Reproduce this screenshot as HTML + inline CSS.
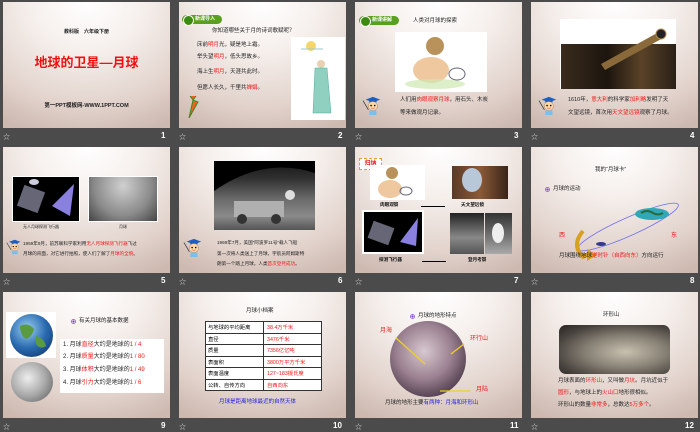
<!DOCTYPE html>
<html><head><meta charset="utf-8">
<style>
*{margin:0;padding:0;box-sizing:border-box}
body{width:700px;height:430px;background:#4b4b4b;position:relative;overflow:hidden;font-family:"Liberation Sans","Noto Sans CJK SC",sans-serif}
.s{position:absolute;width:167px;height:126px;overflow:hidden;background:radial-gradient(ellipse 95% 110% at 50% 0%,#ffffff 0%,#f6f0ed 35%,#e2d3cc 75%,#cdb9b0 100%)}
.a{position:absolute;white-space:nowrap;line-height:1}
.r{color:#f01818}
.b{color:#2020e0}
.n{position:absolute;color:#fff;font-size:8px;font-weight:bold}
.ic{position:absolute;color:#ddd;font-size:7px}
.badge{position:absolute;height:9px;width:40px;background:#5aa020;border-radius:5px;color:#fff;font-size:5px;font-weight:bold;padding-left:13px;line-height:9px}
.badge:before{content:"";position:absolute;left:1px;top:0;width:9px;height:9px;border-radius:50%;background:#3d8a10;border:1px solid #fff}
.t{font-size:5.5px;color:#222}
.teach{position:absolute;width:20px;height:22px}
</style></head><body>

<svg width="0" height="0" style="position:absolute">
<defs>
<g id="tc">
<line x1="1" y1="6" x2="7" y2="16" stroke="#333" stroke-width="0.8"/>
<polygon points="4,5 12,2 20,5 12,8" fill="#1e5fc0"/>
<rect x="8" y="5" width="8" height="3" fill="#1e5fc0"/>
<circle cx="12" cy="12" r="5" fill="#fbd7a8" stroke="#a0663a" stroke-width="0.4"/>
<circle cx="10" cy="11.5" r="0.9" fill="#000"/><circle cx="14" cy="11.5" r="0.9" fill="#000"/>
<path d="M10 14 Q12 15.5 14 14" stroke="#c33" stroke-width="0.6" fill="none"/>
<rect x="8" y="17" width="8" height="5" fill="#7ac0e8"/>
</g>
</defs>
</svg>

<!-- Slide 1 -->
<div class="s" style="left:3px;top:2px">
<div class="a" style="left:0;width:167px;text-align:center;top:28px;font-size:5px;font-weight:bold;color:#222">教科版　六年级下册</div>
<div class="a" style="left:0;width:167px;text-align:center;top:54px;font-size:13px;font-weight:bold;color:#f01010">地球的卫星—月球</div>
<div class="a" style="left:0;width:167px;text-align:center;top:102px;font-size:5.5px;font-weight:bold;color:#222">第一PPT模板网-WWW.1PPT.COM</div>
</div>

<!-- Slide 2 -->
<div class="s" style="left:179px;top:2px">
<div class="badge" style="left:3px;top:13px">新课导入</div>
<div class="a t" style="left:33px;top:27px">你知道哪些关于月的诗词歌赋呢？</div>
<div class="a t" style="left:18px;top:41px">床前<span class="r">明月</span>光，疑是地上霜。</div>
<div class="a t" style="left:18px;top:53px">举头望<span class="r">明月</span>，低头思故乡。</div>
<div class="a t" style="left:18px;top:68px">海上生<span class="r">明月</span>，天涯共此时。</div>
<div class="a t" style="left:18px;top:84px">但愿人长久，千里共<span class="r">婵娟</span>。</div>
<div style="position:absolute;left:112px;top:35px;width:54px;height:83px;background:#fff"></div>
<svg style="position:absolute;left:112px;top:35px" width="54" height="83">
<circle cx="20" cy="9" r="5" fill="#f6d66a"/><path d="M10 12 h22" stroke="#9cc" stroke-width="1"/>
<circle cx="30" cy="27" r="4" fill="#e8d0b0"/>
<path d="M24 31 L36 31 L40 76 L22 76 Z" fill="#8fd0c0" stroke="#5a9" stroke-width="0.5"/>
</svg>
<svg style="position:absolute;left:4px;top:92px" width="22" height="26"><path d="M7 2 l3 4 3-4 M10 6 L6 24 L15 8 Z" fill="#f06020" stroke="#3a8a20" stroke-width="1"/></svg>
</div>

<!-- Slide 3 -->
<div class="s" style="left:355px;top:2px">
<div class="badge" style="left:4px;top:14px">新课讲解</div>
<div class="a t" style="left:58px;top:17px">人类对月球的探索</div>
<div style="position:absolute;left:40px;top:30px;width:92px;height:60px;background:#fff"></div>
<svg style="position:absolute;left:40px;top:30px" width="92" height="60"><circle cx="40" cy="14" r="9" fill="#b8925a"/><ellipse cx="36" cy="38" rx="18" ry="13" fill="#f0c8a0"/><ellipse cx="62" cy="42" rx="8" ry="6" fill="none" stroke="#667" stroke-width="1"/><ellipse cx="40" cy="52" rx="30" ry="5" fill="#cde8b0" opacity=".7"/></svg>
<svg class="teach" style="left:7px;top:93px" viewBox="0 0 22 24"><use href="#tc"/></svg>
<div class="a t" style="left:45px;top:96px">人们用<span class="r">肉眼观察月球</span>，用石头、木炭</div>
<div class="a t" style="left:45px;top:109px">等来做观月记录。</div>
</div>

<!-- Slide 4 -->
<div class="s" style="left:531px;top:2px">
<div style="position:absolute;left:29px;top:17px;width:116px;height:70px;background:#fff"></div>
<div style="position:absolute;left:30px;top:42px;width:115px;height:45px;background:linear-gradient(90deg,#3a2c1e,#1c150e 40%,#5a4228 70%,#2a2016)"></div>
<svg style="position:absolute;left:60px;top:22px" width="80" height="50"><path d="M10 40 L68 8 L72 14 L14 46 Z" fill="#8a6a3a"/><circle cx="70" cy="10" r="5" fill="#222" stroke="#b08a50"/></svg>
<svg class="teach" style="left:7px;top:93px" viewBox="0 0 22 24"><use href="#tc"/></svg>
<div class="a t" style="left:37px;top:96px">1610年，<span class="r">意大利</span>的科学家<span class="r">加利略</span>发明了天</div>
<div class="a t" style="left:37px;top:109px">文望远镜，首次用<span class="r">天文望远镜</span>观察了月球。</div>
</div>

<!-- Slide 5 -->
<div class="s" style="left:3px;top:147px">
<div style="position:absolute;left:9px;top:29px;width:68px;height:46px;background:#000;border:1px solid #fff"></div>
<svg style="position:absolute;left:9px;top:29px" width="68" height="46"><rect x="8" y="12" width="22" height="22" fill="#667" transform="rotate(20 19 23)"/><polygon points="40,30 62,8 58,40" fill="#8a80e0"/><ellipse cx="22" cy="6" rx="5" ry="3" fill="#ccd"/></svg>
<div style="position:absolute;left:85px;top:29px;width:70px;height:46px;background:radial-gradient(ellipse at 50% 20%,#d0d0d0,#8a8a8a 60%,#444);border:1px solid #fff"></div>
<div class="a" style="left:20px;top:78px;font-size:4px;color:#222">无人月球探测飞行器</div>
<div class="a" style="left:116px;top:78px;font-size:4px;color:#222">月球</div>
<svg class="teach" style="left:3px;top:91px;width:16px;height:18px" viewBox="0 0 22 24"><use href="#tc"/></svg>
<div class="a" style="left:20px;top:95px;font-size:4.6px;color:#222">1959年9月，前苏联科学家利用<span class="r">无人月球探测飞行器</span>飞过</div>
<div class="a" style="left:20px;top:105px;font-size:4.6px;color:#222">月球的背面，对它进行拍照，使人们了解了<span class="r">月球的全貌</span>。</div>
</div>

<!-- Slide 6 -->
<div class="s" style="left:179px;top:147px">
<div style="position:absolute;left:35px;top:14px;width:101px;height:69px;background:linear-gradient(180deg,#151515 0%,#303030 25%,#6a6a6a 55%,#8a8a8a 80%,#555 100%)"></div>
<svg style="position:absolute;left:35px;top:14px" width="101" height="69"><path d="M0 30 Q50 -5 101 12 L101 0 L0 0Z" fill="#000"/><rect x="20" y="40" width="50" height="16" fill="#b0b0b0"/><circle cx="28" cy="58" r="5" fill="#333"/><circle cx="62" cy="58" r="5" fill="#333"/><circle cx="76" cy="34" r="5" fill="#ddd"/></svg>
<svg class="teach" style="left:4px;top:90px" viewBox="0 0 22 24"><use href="#tc"/></svg>
<div class="a" style="left:38px;top:94px;font-size:4.6px;color:#222">1969年7月，美国“阿波罗11号”载人飞船</div>
<div class="a" style="left:38px;top:105px;font-size:4.6px;color:#222">第一次将人类送上了月球，宇航员阿姆斯特</div>
<div class="a" style="left:38px;top:115px;font-size:4.6px;color:#222">朗第一个踏上月球，人类<span class="r">首次登月成功</span>。</div>
</div>

<!-- Slide 7 -->
<div class="s" style="left:355px;top:147px">
<div style="position:absolute;left:4px;top:11px;width:23px;height:12px;border:1px dashed #e9a020;background:#fff;color:#f02020;font-size:6px;font-weight:bold;text-align:center;line-height:10px">归纳</div>
<div style="position:absolute;left:15px;top:18px;width:55px;height:35px;background:#fff"></div>
<svg style="position:absolute;left:15px;top:18px" width="55" height="35"><circle cx="22" cy="8" r="6" fill="#b8925a"/><ellipse cx="20" cy="24" rx="12" ry="9" fill="#f0c8a0"/><ellipse cx="36" cy="26" rx="6" ry="4" fill="none" stroke="#667"/></svg>
<div style="position:absolute;left:97px;top:19px;width:56px;height:33px;background:linear-gradient(90deg,#5a3a28,#8a5a38,#3a2418)"></div>
<svg style="position:absolute;left:97px;top:19px" width="56" height="33"><ellipse cx="20" cy="14" rx="10" ry="12" fill="#b8c8d8"/></svg>
<div class="a" style="left:25px;top:56px;font-size:4.6px;font-weight:bold;color:#111">肉眼观察</div>
<div class="a" style="left:106px;top:56px;font-size:4.6px;font-weight:bold;color:#111">天文望远镜</div>
<div style="position:absolute;left:66px;top:59px;width:24px;height:1px;background:#000"></div>
<div style="position:absolute;left:7px;top:63px;width:62px;height:44px;background:#000;border:2px solid #fff"></div>
<svg style="position:absolute;left:9px;top:65px" width="58" height="40"><rect x="6" y="12" width="22" height="18" fill="#667" transform="rotate(20 17 21)"/><polygon points="36,30 54,6 52,34" fill="#8a80e0"/></svg>
<div style="position:absolute;left:95px;top:66px;width:34px;height:41px;background:linear-gradient(180deg,#222,#888 60%,#555)"></div>
<div style="position:absolute;left:130px;top:66px;width:27px;height:41px;background:linear-gradient(180deg,#333,#777 60%,#aaa)"></div>
<svg style="position:absolute;left:130px;top:66px" width="27" height="41"><ellipse cx="13" cy="20" rx="6" ry="10" fill="#eee"/></svg>
<div class="a" style="left:24px;top:111px;font-size:4.6px;font-weight:bold;color:#111">探测飞行器</div>
<div class="a" style="left:113px;top:111px;font-size:4.6px;font-weight:bold;color:#111">登月考察</div>
<div style="position:absolute;left:67px;top:114px;width:24px;height:1px;background:#000"></div>
</div>

<!-- Slide 8 -->
<div class="s" style="left:531px;top:147px">
<div class="a t" style="left:64px;top:21px">我的“月球卡”</div>
<div style="position:absolute;left:14px;top:40px;width:5px;height:5px;border:1px solid #9b6be0;border-radius:50%;background:radial-gradient(#7040c0 40%,transparent 45%)"></div>
<div class="a t" style="left:22px;top:40px">月球的运动</div>
<svg style="position:absolute;left:0;top:0" width="167" height="126">
<ellipse cx="97" cy="80" rx="55" ry="9" transform="rotate(-24 97 80)" fill="none" stroke="#7070f0" stroke-width="0.8"/>
<ellipse cx="121" cy="67" rx="17" ry="6" fill="#30a8b8"/><path d="M110 66 q6-4 12 0 q5 3 10 0" stroke="#2a6a3a" stroke-width="2" fill="none"/>
<ellipse cx="70" cy="97" rx="5" ry="2" fill="#333a88"/>
<path d="M52 84 Q40 98 52 110 L60 106" stroke="#d8a020" stroke-width="4" fill="none"/>
<polygon points="56,102 66,108 56,114" fill="#d8a020"/>
</svg>
<div class="a r" style="left:28px;top:86px;font-size:6px">西</div>
<div class="a r" style="left:140px;top:86px;font-size:6px">东</div>
<div class="a t" style="left:28px;top:107px">月球围绕地球<span class="r">逆时针（自西向东）</span>方向运行</div>
</div>

<!-- Slide 9 -->
<div class="s" style="left:3px;top:292px">
<div style="position:absolute;left:3px;top:20px;width:50px;height:46px;background:#fff"></div>
<div style="position:absolute;left:7px;top:22px;width:43px;height:43px;border-radius:50%;background:radial-gradient(circle at 40% 35%,#9ad0f0,#2a6ab0 50%,#0a2a5a)"></div>
<svg style="position:absolute;left:7px;top:22px" width="43" height="43"><path d="M10 12 q8-4 14 3 q-2 8-8 10 q-6-4-6-13z M26 22 q8 2 10 10 q-6 4-10-2z" fill="#5a9a40"/></svg>
<div style="position:absolute;left:8px;top:70px;width:42px;height:40px;border-radius:50%;background:radial-gradient(circle at 40% 40%,#eee,#aaa 50%,#555)"></div>
<div style="position:absolute;left:68px;top:27px;width:5px;height:5px;border:1px solid #9b6be0;border-radius:50%;background:radial-gradient(#7040c0 40%,transparent 45%)"></div>
<div class="a t" style="left:76px;top:27px">有关月球的基本数据</div>
<div style="position:absolute;left:57px;top:47px;width:104px;height:54px;background:#fff"></div>
<div class="a" style="left:60px;top:50px;font-size:6px;color:#222">1. 月球<span class="r">直径</span>大约是地球的<span class="r">1 / 4</span></div>
<div class="a" style="left:60px;top:62px;font-size:6px;color:#222">2. 月球<span class="r">质量</span>大约是地球的<span class="r">1 / 80</span></div>
<div class="a" style="left:60px;top:75px;font-size:6px;color:#222">3. 月球<span class="r">体积</span>大约是地球的<span class="r">1 / 49</span></div>
<div class="a" style="left:60px;top:88px;font-size:6px;color:#222">4. 月球<span class="r">引力</span>大约是地球的<span class="r">1 / 6</span></div>
</div>

<!-- Slide 10 -->
<div class="s" style="left:179px;top:292px">
<div class="a t" style="left:67px;top:17px">月球小档案</div>
<table style="position:absolute;left:26px;top:29px;border-collapse:collapse;font-size:5.3px;background:#fff;font-family:inherit">
<tr><td style="border:0.8px solid #333;width:58px;height:11.5px;padding-left:2px">与地球的平均距离</td><td class="r" style="border:0.8px solid #333;width:58px;padding-left:3px">38.4万千米</td></tr>
<tr><td style="border:0.8px solid #333;height:11.5px;padding-left:2px">直径</td><td class="r" style="border:0.8px solid #333;padding-left:3px">3476千米</td></tr>
<tr><td style="border:0.8px solid #333;height:11.5px;padding-left:2px">质量</td><td class="r" style="border:0.8px solid #333;padding-left:3px">7356亿亿吨</td></tr>
<tr><td style="border:0.8px solid #333;height:11.5px;padding-left:2px">表面积</td><td class="r" style="border:0.8px solid #333;padding-left:3px">3800万平方千米</td></tr>
<tr><td style="border:0.8px solid #333;height:11.5px;padding-left:2px">表面温度</td><td class="r" style="border:0.8px solid #333;padding-left:3px">127~183摄氏度</td></tr>
<tr><td style="border:0.8px solid #333;height:11.5px;padding-left:2px">公转、自传方向</td><td class="r" style="border:0.8px solid #333;padding-left:3px">自西向东</td></tr>
</table>
<div class="a b" style="left:40px;top:108px;font-size:5.5px">月球是距离地球最近的自然天体</div>
</div>

<!-- Slide 11 -->
<div class="s" style="left:355px;top:292px">
<div style="position:absolute;left:55px;top:22px;width:5px;height:5px;border:1px solid #9b6be0;border-radius:50%;background:radial-gradient(#7040c0 40%,transparent 45%)"></div>
<div class="a t" style="left:63px;top:22px">月球的地形特点</div>
<div style="position:absolute;left:35px;top:29px;width:76px;height:76px;border-radius:50%;background:radial-gradient(circle at 45% 40%,#d8c8d0,#9a8090 45%,#4a3848 80%,#1a1018)"></div>
<svg style="position:absolute;left:0;top:0" width="167" height="126"><line x1="41" y1="46" x2="70" y2="72" stroke="#f0d020" stroke-width="1.3"/><line x1="109" y1="52" x2="96" y2="62" stroke="#f0d020" stroke-width="1.3"/><line x1="85" y1="99" x2="115" y2="99" stroke="#f0d020" stroke-width="1.3"/></svg>
<div class="a r" style="left:25px;top:36px;font-size:6px">月海</div>
<div class="a r" style="left:115px;top:44px;font-size:6px">环行山</div>
<div class="a r" style="left:121px;top:95px;font-size:6px">月陆</div>
<div class="a t" style="left:30px;top:109px">月球的地形主要<span class="b">有两种：月海和环形山</span></div>
</div>

<!-- Slide 12 -->
<div class="s" style="left:531px;top:292px">
<div class="a t" style="left:72px;top:21px">环形山</div>
<div style="position:absolute;left:28px;top:33px;width:111px;height:49px;border-radius:7px;background:radial-gradient(ellipse at 60% 55%,#c8c0b0,#8a8478 40%,#4a4440 75%,#2a2420)"></div>
<div class="a t" style="left:27px;top:87px">月球表面的<span class="r">环形山</span>，又叫做<span class="r">月坑</span>。月坑近似于</div>
<div class="a t" style="left:27px;top:99px"><span class="r">圆形</span>，与地球上的<span class="r">火山口</span>地形很相似。</div>
<div class="a t" style="left:27px;top:111px">环形山的数量<span class="r">非常多</span>，总数达<span class="r">5万多个</span>。</div>
</div>

<!-- footers -->
<div class="ic" style="left:3px;top:132px">☆</div><div class="n" style="left:161px;top:131px">1</div>
<div class="ic" style="left:179px;top:132px">☆</div><div class="n" style="left:338px;top:131px">2</div>
<div class="ic" style="left:355px;top:132px">☆</div><div class="n" style="left:514px;top:131px">3</div>
<div class="ic" style="left:531px;top:132px">☆</div><div class="n" style="left:690px;top:131px">4</div>
<div class="ic" style="left:3px;top:277px">☆</div><div class="n" style="left:161px;top:276px">5</div>
<div class="ic" style="left:179px;top:277px">☆</div><div class="n" style="left:338px;top:276px">6</div>
<div class="ic" style="left:355px;top:277px">☆</div><div class="n" style="left:514px;top:276px">7</div>
<div class="ic" style="left:531px;top:277px">☆</div><div class="n" style="left:690px;top:276px">8</div>
<div class="ic" style="left:3px;top:422px">☆</div><div class="n" style="left:161px;top:421px">9</div>
<div class="ic" style="left:179px;top:422px">☆</div><div class="n" style="left:333px;top:421px">10</div>
<div class="ic" style="left:355px;top:422px">☆</div><div class="n" style="left:510px;top:421px">11</div>
<div class="ic" style="left:531px;top:422px">☆</div><div class="n" style="left:685px;top:421px">12</div>
</body></html>
